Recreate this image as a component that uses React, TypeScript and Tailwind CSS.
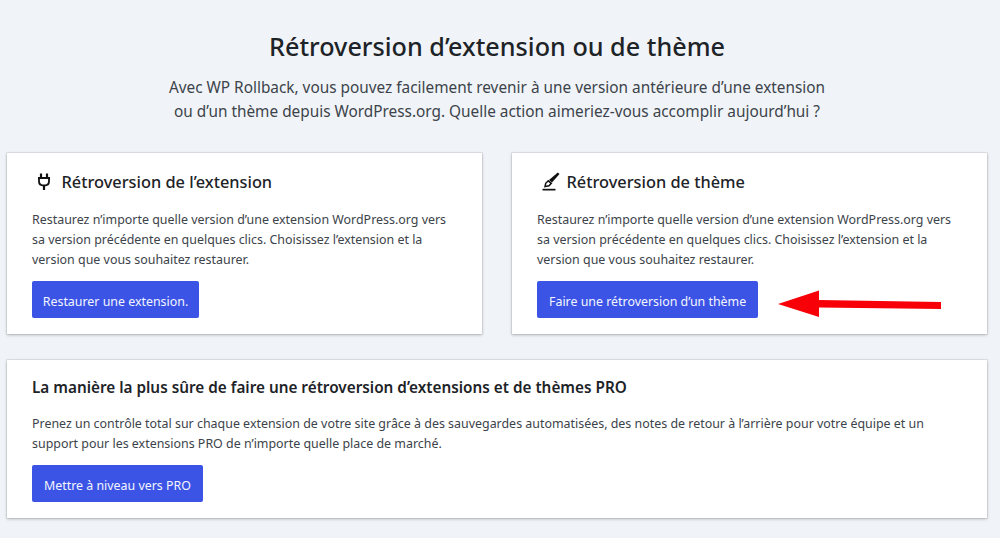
import React from "react";

function Plug() {
  return (
    <svg width="14" height="17" viewBox="0 0 14 17" fill="none" stroke="#111" strokeWidth="1.800" className="-mt-[3px] shrink-0">
      <path d="M4 0.500v4.500M10 0.500v4.500" strokeWidth="2.200" />
      <path d="M1 5h12M2 5v3.500c0 2.800 2 4 5 4s5-1.200 5-4V5" />
      <path d="M7 12.500V17" strokeWidth="2.200" />
    </svg>
  );
}

function Brush() {
  return (
    <svg width="18" height="19" viewBox="0 0 18 19" className="-mt-[3px] shrink-0">
      <path d="M15.800 0.500 L17.500 2 L10 10.500 L7 8 Z" fill="#111" />
      <path d="M6.300 8.800 L9.300 11.300 L7 13.800 L3 14.500 L3.700 11.300 Z" fill="none" stroke="#111" strokeWidth="1.500" />
      <rect x="0.500" y="16.800" width="13" height="1.700" fill="#111" />
    </svg>
  );
}

function Btn({ children, className }: { children: React.ReactNode; className?: string }) {
  return (
    <div className={"inline-flex h-[37px] items-center justify-center whitespace-nowrap rounded-[2px] bg-[#3b54e5] pt-[5px] text-[12.400px] text-[#f4f6ff] " + (className ?? "px-3")}>
      {children}
    </div>
  );
}

function Card({ icon, title, btn, btnClass, extra }: { icon: React.ReactNode; title: string; btn: string; btnClass?: string; extra?: React.ReactNode }) {
  return (
    <div className="h-[181px] w-[475px] bg-white px-[25px] pt-[18px] shadow-[0_0_0_1px_rgba(0,0,0,0.06),0_1px_3px_rgba(0,0,0,0.25)]">
      <div className="flex h-[23px] items-center pl-[5px] text-[16.350px] font-medium text-[#1d2327]">
        <span className="flex w-[24.500px]">{icon}</span>
        {title}
      </div>
      <p className="mt-[16px] text-[12.430px] leading-[20px] text-[#3c434a]">
        Restaurez n’importe quelle version d’une extension WordPress.org vers
        <br />
        sa version précédente en quelques clics. Choisissez l’extension et la
        <br />
        version que vous souhaitez restaurer.
      </p>
      <div className="mt-[11px] flex items-center">
        <Btn className={btnClass}>{btn}</Btn>
        {extra}
      </div>
    </div>
  );
}

export default function App() {
  return (
    <div className="h-[538px] w-[1000px] overflow-hidden bg-[#f0f4f8] pl-[7px] pr-[13px] pt-[29px] font-['Noto_Sans',sans-serif]">
      <h1 className="text-center text-[25.200px] leading-[34px] font-medium text-[#1d2327]">
        Rétroversion d’extension ou de thème
      </h1>
      <p className="mt-[13px] text-center text-[15.360px] leading-[24px] text-[#3c434a]">
        Avec WP Rollback, vous pouvez facilement revenir à une version antérieure d’une extension
        <br />
        ou d’un thème depuis WordPress.org. Quelle action aimeriez-vous accomplir aujourd’hui ?
      </p>
      <div className="mt-[29px] flex gap-[30px]">
        <Card icon={<Plug />} title="Rétroversion de l’extension" btn="Restaurer une extension." btnClass="w-[167px]" />
        <Card
          icon={<Brush />}
          title="Rétroversion de thème"
          btn="Faire une rétroversion d’un thème"
          extra={
            <svg width="164" height="28" viewBox="0 0 164 28" className="ml-[20px] mt-[8px] shrink-0">
              <path d="M0 14 L41 0.500 L41 10 L163 12 L163 19 L41 17.500 L41 27 Z" fill="#f70008" />
            </svg>
          }
        />
      </div>
      <div className="mt-[26px] h-[158px] w-[980px] bg-white px-[25px] pt-[15px] shadow-[0_0_0_1px_rgba(0,0,0,0.06),0_1px_3px_rgba(0,0,0,0.25)]">
        <h2 className="text-[15.300px] leading-[24px] font-semibold text-[#1d2327]">
          La manière la plus sûre de faire une rétroversion d’extensions et de thèmes PRO
        </h2>
        <p className="mt-[15px] text-[12.430px] leading-[20px] text-[#3c434a]">
          Prenez un contrôle total sur chaque extension de votre site grâce à des sauvegardes automatisées, des notes de retour à l’arrière pour votre équipe et un
          <br />
          support pour les extensions PRO de n’importe quelle place de marché.
        </p>
        <div className="mt-[11px]">
          <Btn>Mettre à niveau vers PRO</Btn>
        </div>
      </div>
    </div>
  );
}
